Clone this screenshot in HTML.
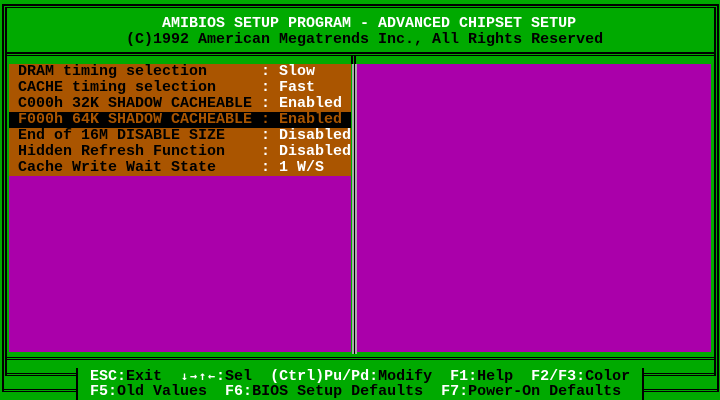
<!DOCTYPE html>
<html><head><meta charset="utf-8"><style>
*{margin:0;padding:0}
body{width:720px;height:400px;background:#00aa00;position:relative;overflow:hidden;font-family:"Liberation Mono","DejaVu Sans Mono",monospace;font-size:15px;font-weight:bold;}
.a{position:absolute}
.t{position:absolute;height:16px;line-height:16px;white-space:pre;letter-spacing:0}
.k{color:#fff}.d{color:#000}
.ar{display:inline-block;width:9px;text-align:center;font-family:"DejaVu Sans Mono",monospace;font-size:12px}
.bk{background:#000}
</style></head><body>
<div class="a bk" style="left:2px;top:4px;width:2px;height:388px"></div>
<div class="a bk" style="left:2px;top:4px;width:717px;height:2px"></div>
<div class="a bk" style="left:717px;top:4px;width:2px;height:388px"></div>
<div class="a bk" style="left:5px;top:7px;width:2px;height:368px"></div>
<div class="a bk" style="left:5px;top:7px;width:710px;height:1px"></div>
<div class="a bk" style="left:714px;top:7px;width:2px;height:368px"></div>
<div class="a bk" style="left:5px;top:52px;width:711px;height:2px"></div>
<div class="a bk" style="left:5px;top:55px;width:711px;height:1px"></div>
<div class="a" style="left:9px;top:64px;width:342px;height:112px;background:#aa5500"></div>
<div class="a" style="left:9px;top:176px;width:342px;height:176px;background:#aa00aa"></div>
<div class="a" style="left:357px;top:64px;width:354px;height:288px;background:#aa00aa"></div>
<div class="a" style="left:9px;top:112px;width:342px;height:16px;background:#000"></div>
<div class="a" style="left:352px;top:64px;width:5px;height:290px;background:#aaaaaa"></div>
<div class="a bk" style="left:354px;top:56px;width:1px;height:298px"></div>
<div class="a bk" style="left:351px;top:56px;width:2px;height:8px"></div>
<div class="a bk" style="left:355px;top:56px;width:1px;height:8px"></div>
<div class="a bk" style="left:5px;top:357px;width:711px;height:1px"></div>
<div class="a bk" style="left:5px;top:359px;width:711px;height:1px"></div>
<div class="a bk" style="left:5px;top:373px;width:71px;height:1px"></div>
<div class="a bk" style="left:5px;top:375px;width:71px;height:1px"></div>
<div class="a bk" style="left:2px;top:389px;width:74px;height:1px"></div>
<div class="a bk" style="left:2px;top:391px;width:74px;height:1px"></div>
<div class="a bk" style="left:644px;top:373px;width:72px;height:1px"></div>
<div class="a bk" style="left:644px;top:375px;width:72px;height:1px"></div>
<div class="a bk" style="left:644px;top:389px;width:75px;height:1px"></div>
<div class="a bk" style="left:644px;top:391px;width:75px;height:1px"></div>
<div class="a bk" style="left:76px;top:368px;width:2px;height:32px"></div>
<div class="a bk" style="left:642px;top:368px;width:2px;height:32px"></div>
<div class="t k" style="left:162px;top:16px">AMIBIOS SETUP PROGRAM - ADVANCED CHIPSET SETUP</div>
<div class="t d" style="left:126px;top:32px">(C)1992 American Megatrends Inc., All Rights Reserved</div>
<div class="t d" style="left:18px;top:64px">DRAM timing selection      <span class="k">: Slow</span></div>
<div class="t d" style="left:18px;top:80px">CACHE timing selection     <span class="k">: Fast</span></div>
<div class="t d" style="left:18px;top:96px">C000h 32K SHADOW CACHEABLE <span class="k">: Enabled</span></div>
<div class="t" style="left:18px;top:112px;color:#aa5500">F000h 64K SHADOW CACHEABLE : Enabled</div>
<div class="t d" style="left:18px;top:128px">End of 16M DISABLE SIZE    <span class="k">: Disabled</span></div>
<div class="t d" style="left:18px;top:144px">Hidden Refresh Function    <span class="k">: Disabled</span></div>
<div class="t d" style="left:18px;top:160px">Cache Write Wait State     <span class="k">: 1 W/S</span></div>
<div class="t d" style="left:90px;top:368px"><span class="k">ESC:</span>Exit  <span class="k"><span class="ar">↓</span><span class="ar">→</span><span class="ar">↑</span><span class="ar">←</span>:</span>Sel  <span class="k">(Ctrl)Pu/Pd:</span>Modify  <span class="k">F1:</span>Help  <span class="k">F2/F3:</span>Color</div>
<div class="t d" style="left:90px;top:384px"><span class="k">F5:</span>Old Values  <span class="k">F6:</span>BIOS Setup Defaults  <span class="k">F7:</span>Power-On Defaults</div>
</body></html>
